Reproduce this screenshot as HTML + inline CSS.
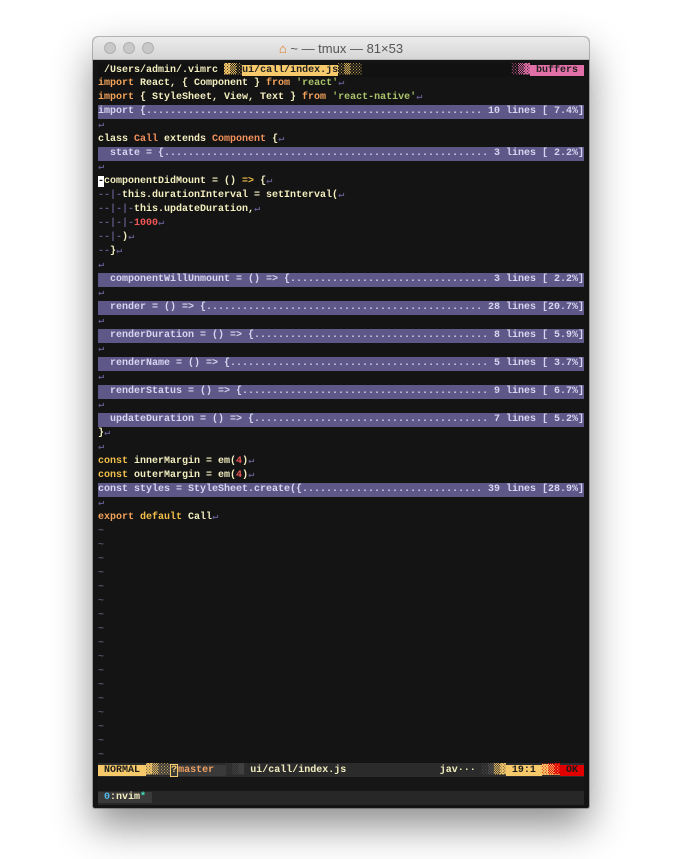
<!DOCTYPE html>
<html><head><meta charset="utf-8"><style>
*{margin:0;padding:0;box-sizing:border-box}
html,body{width:679px;height:859px;background:#fff;overflow:hidden}
.win{position:absolute;left:93px;top:37px;width:496px;height:771px;border-radius:5px 5px 2px 2px;background:#141414;box-shadow:0 18px 40px rgba(0,0,0,.45),0 0 0 1px rgba(0,0,0,.25);overflow:hidden}
.tb{position:absolute;left:0;top:0;width:496px;height:23px;background:linear-gradient(#ececec,#d6d6d6);border-bottom:1px solid #b5b5b5}
.dot{position:absolute;top:5px;width:12px;height:12px;border-radius:50%;background:#c8c8c8;border:1px solid #b0b0b0}
.title{position:absolute;left:0;right:0;top:4px;text-align:center;font:13px "Liberation Sans",sans-serif;color:#555}
.term{position:absolute;left:5px;top:26px;width:486px;font:bold 10px/14px "Liberation Mono","DejaVu Sans Mono",monospace;color:#f3eebf}
.r{height:14px;white-space:pre;overflow:hidden;position:relative}
.f{background:#5d5888;color:#d6d4f0;display:flex}
.f .d{flex:1;overflow:hidden}
.k{color:#f3a25a}.s{color:#a9c46a}.o{color:#f4915c}.y{color:#f2c04a}.n{color:#f25757}
.g{color:#5d5888}.t{color:#565466}
.ds{font-family:"DejaVu Sans Mono",monospace;font-weight:normal}
</style></head><body>
<div class="win">
<div class="tb">
<div class="dot" style="left:11px"></div><div class="dot" style="left:30px"></div><div class="dot" style="left:49px"></div>
<div class="title"><span style="color:#e07a20">⌂</span> ~ — tmux — 81×53</div>
</div>
<div class="term">
<div class="r" style="background:#111"><span> /Users/admin/.vimrc </span><span class="ds" style="color:#f5c96a">▓▒░</span><span style="background:#f6c96a;color:#222">ui/call/index.js</span><span class="ds" style="color:#f5c96a">░▒░░</span><span style="position:absolute;right:0;top:0"><span class="ds" style="color:#e270a8">░▒▓</span><span style="background:#e270a8;color:#222"> buffers </span></span></div>
<div class="r"><span class="k">import</span> React, { Component } <span class="k">from</span> <span class="s">'react'</span><span class="g">↵</span></div>
<div class="r"><span class="k">import</span> { StyleSheet, View, Text } <span class="k">from</span> <span class="s">'react-native'</span><span class="g">↵</span></div>
<div class="r f"><span>import {</span><span class="d">.............................................................................</span><span> 10 lines [ 7.4%]</span></div>
<div class="r"><span class="g">↵</span></div>
<div class="r">class <span class="o">Call</span> extends <span class="o">Component</span> {<span class="g">↵</span></div>
<div class="r f"><span>  state = {</span><span class="d">.............................................................................</span><span> 3 lines [ 2.2%]</span></div>
<div class="r"><span class="g">↵</span></div>
<div class="r"><span style="background:#fff;color:#111">-</span>componentDidMount = () <span class="y">=&gt;</span> {<span class="g">↵</span></div>
<div class="r"><span class="g">--|-</span>this.durationInterval = setInterval(<span class="g">↵</span></div>
<div class="r"><span class="g">--|-|-</span>this.updateDuration,<span class="g">↵</span></div>
<div class="r"><span class="g">--|-|-</span><span class="n">1000</span><span class="g">↵</span></div>
<div class="r"><span class="g">--|-</span>)<span class="g">↵</span></div>
<div class="r"><span class="g">--</span>}<span class="g">↵</span></div>
<div class="r"><span class="g">↵</span></div>
<div class="r f"><span>  componentWillUnmount = () =&gt; {</span><span class="d">...............................................................</span><span> 3 lines [ 2.2%]</span></div>
<div class="r"><span class="g">↵</span></div>
<div class="r f"><span>  render = () =&gt; {</span><span class="d">...............................................................</span><span> 28 lines [20.7%]</span></div>
<div class="r"><span class="g">↵</span></div>
<div class="r f"><span>  renderDuration = () =&gt; {</span><span class="d">...............................................................</span><span> 8 lines [ 5.9%]</span></div>
<div class="r"><span class="g">↵</span></div>
<div class="r f"><span>  renderName = () =&gt; {</span><span class="d">...............................................................</span><span> 5 lines [ 3.7%]</span></div>
<div class="r"><span class="g">↵</span></div>
<div class="r f"><span>  renderStatus = () =&gt; {</span><span class="d">...............................................................</span><span> 9 lines [ 6.7%]</span></div>
<div class="r"><span class="g">↵</span></div>
<div class="r f"><span>  updateDuration = () =&gt; {</span><span class="d">...............................................................</span><span> 7 lines [ 5.2%]</span></div>
<div class="r">}<span class="g">↵</span></div>
<div class="r"><span class="g">↵</span></div>
<div class="r"><span class="y">const</span> innerMargin = em(<span class="n">4</span>)<span class="g">↵</span></div>
<div class="r"><span class="y">const</span> outerMargin = em(<span class="n">4</span>)<span class="g">↵</span></div>
<div class="r f"><span>const styles = StyleSheet.create({</span><span class="d">...............................................................</span><span> 39 lines [28.9%]</span></div>
<div class="r"><span class="g">↵</span></div>
<div class="r"><span class="k">export</span> <span class="y">default</span> Call<span class="g">↵</span></div>
<div class="r t">~</div><div class="r t">~</div><div class="r t">~</div><div class="r t">~</div><div class="r t">~</div><div class="r t">~</div><div class="r t">~</div><div class="r t">~</div><div class="r t">~</div><div class="r t">~</div><div class="r t">~</div><div class="r t">~</div><div class="r t">~</div><div class="r t">~</div><div class="r t">~</div><div class="r t">~</div><div class="r t">~</div>
<div class="r" style="background:#2b2b2b"><span style="background:#f6c96a;color:#1a1a1a"> NORMAL </span><span class="ds" style="color:#f6c96a;background:#3a3a3a">▓▒░░</span><span style="background:#3a3a3a;color:#f0a060"><span style="border:1px solid #f6c96a;color:#f6c96a">?</span>master  </span><span class="ds" style="color:#444">░▒▓</span><span style="color:#f3eebf"> ui/call/index.js</span><span style="position:absolute;right:0;top:0"><span style="color:#f3eebf">jav··· </span><span class="ds" style="color:#555">░▒</span><span class="ds" style="color:#f6c96a">▒▓</span><span style="background:#f6c96a;color:#1a1a1a"> 19:1 </span><span class="ds" style="color:#e00000;background:#f6c96a">░▒▓</span><span style="background:#e00000;color:#1a1a1a"> OK </span></span></div>
<div class="r" style="background:#161616"></div>
<div class="r" style="background:#272727"><span style="background:#3a3a3a;color:#f3eebf"> <span style="color:#4fb8e8">0</span>:nvim<span style="color:#3fe0c0">*</span> </span></div>
</div>
</div>
</body></html>
